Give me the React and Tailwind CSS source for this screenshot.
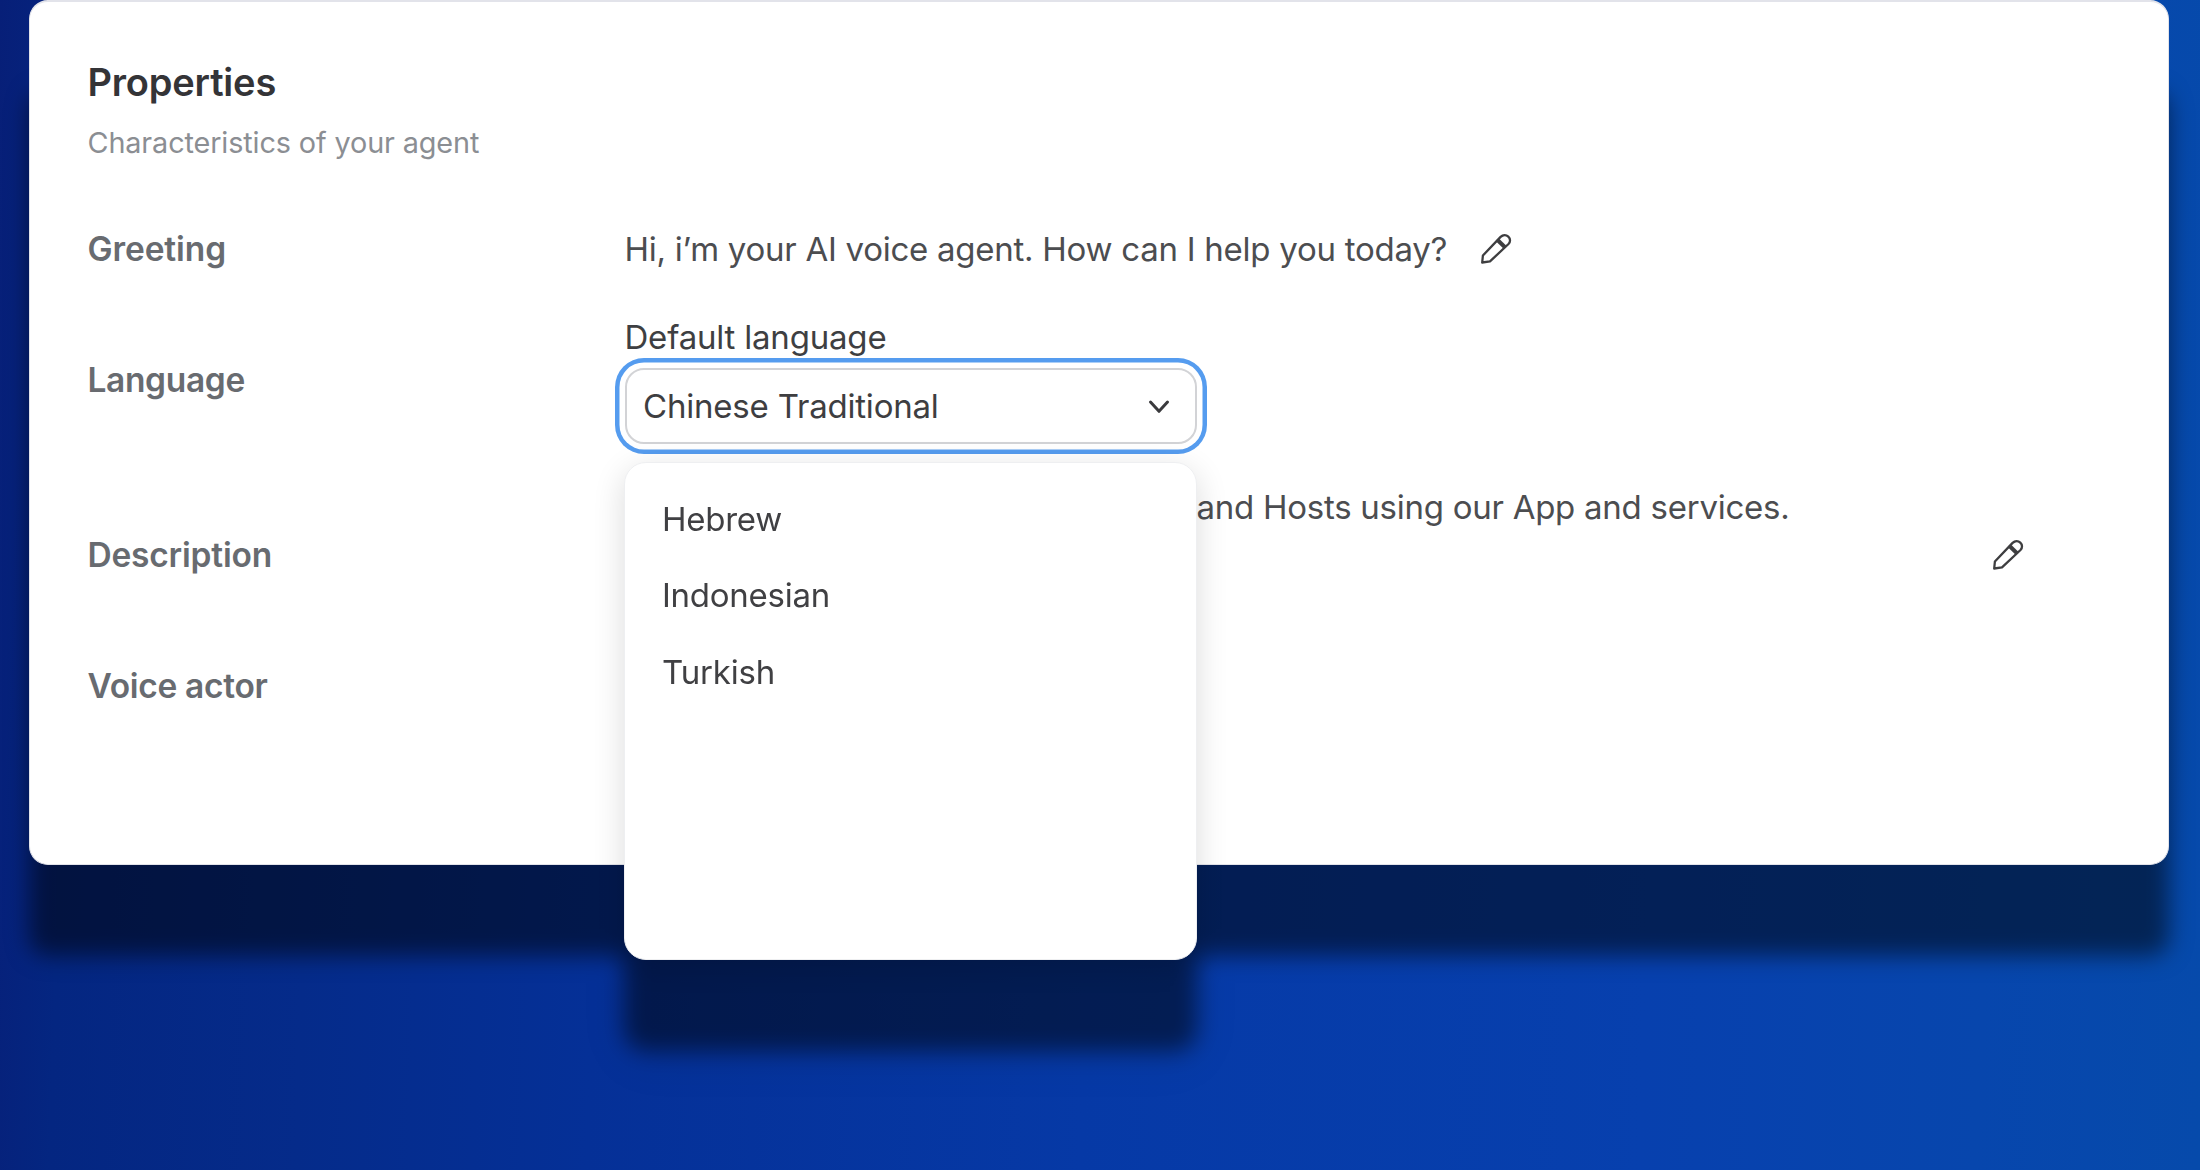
import React from "react";

function Pencil() {
  return (
    <svg width="32" height="32" viewBox="11 7 32 32" fill="none" stroke="#3e3e40" strokeWidth="2.3" strokeLinejoin="round" strokeLinecap="round" className="shrink-0">
      <path d="M13.2 36.5 13.9 29.5 31.6 10.9C34 8.6 37.2 8.7 39.3 10.7c2.2 2.1 2.3 5.1 0.2 7.3L21 35.4Z" />
      <path d="m28.8 14.3 7.2 7" strokeWidth="4" strokeLinecap="butt" />
    </svg>
  );
}

function Row({ label, height, tracking, children }) {
  return (
    <div className={`flex items-center ${height}`}>
      <div className={`w-[537px] shrink-0 text-[33.5px] font-semibold text-[#686b70] ${tracking}`}>{label}</div>
      {children}
    </div>
  );
}

const options = [
  { name: "Hebrew", tracking: "tracking-[-0.25px]" },
  { name: "Indonesian", tracking: "tracking-[-0.25px]" },
  { name: "Turkish", tracking: "tracking-[-0.2px]" },
];

function LanguageSelect() {
  return (
    <div className="relative ml-[0.5px] mt-3 w-[572px]">
      <button className="flex h-[76px] w-full items-center justify-between rounded-[19px] border-[2.5px] border-[#d2d3d6] bg-white pl-4 pr-[25px] text-[#3e3e41] shadow-[0_0_0_5.5px_#ffffff,0_0_0_10px_#559cef]">
        <span className="tracking-[-0.2px]">Chinese Traditional</span>
        <svg width="22" height="16" viewBox="0 0 22 16" fill="none" stroke="#3a3a3d" strokeWidth="3" strokeLinecap="round" strokeLinejoin="round">
          <path d="M2.5 4 11 13.3 19.5 4" />
        </svg>
      </button>
      <ul className="absolute left-[-1px] top-[94px] z-10 h-[498px] w-[572.5px] rounded-[22px] border border-[#eeeff1] bg-white pt-[18px] text-[#404043] shadow-[0_8px_32px_rgba(0,0,0,0.14)]">
        {options.map((o) => (
          <li key={o.name} className={`flex h-[76.3px] items-center pl-[37px] ${o.tracking}`}>
            {o.name}
          </li>
        ))}
      </ul>
    </div>
  );
}

export default function App() {
  return (
    <div className="h-[1170px] w-[2200px] overflow-hidden bg-[linear-gradient(92deg,#071f78_0%,#042681_4%,#052b8a_15%,#053097_28%,#0639a6_50%,#0740ae_75%,#0746ad_90%,#064aab_100%)] pl-[29px] font-['Inter',sans-serif]">
      <div className="drop-shadow-[0_91px_11px_rgba(0,0,0,0.5)]">
        <main className="h-[865px] w-[2140px] rounded-[19px] border border-t-2 border-[#e2e3ea] bg-white pl-[57.5px] pt-14 text-[33px] leading-10 text-[#4c4d50]">
          <h1 className="text-[38px] font-semibold leading-[48px] tracking-[-0.2px] text-[#343437]">Properties</h1>
          <p className="mt-[16.5px] text-[28.8px] tracking-[-0.12px] text-[#8b8e93]">Characteristics of your agent</p>

          <div className="mt-[46px]">
            <Row label="Greeting" height="h-20" tracking="tracking-[-0.1px]">
              <span className="tracking-[-0.26px]">Hi, i’m your AI voice agent. How can I help you today?</span>
              <div className="ml-[33px]">
                <Pencil />
              </div>
            </Row>

            <Row label="Language" height="h-[183px]" tracking="tracking-[-0.35px]">
              <div>
                <div className="translate-y-px tracking-[-0.2px] text-[#3e3f42]">Default language</div>
                <LanguageSelect />
              </div>
            </Row>

            <Row label="Description" height="h-[167px]" tracking="tracking-[-0.2px]">
              <p className="ml-[572px] h-36 leading-[48px] tracking-[-0.26px]">and Hosts using our App and services.</p>
              <div className="ml-auto mr-[144px]">
                <Pencil />
              </div>
            </Row>

            <Row label="Voice actor" height="h-[94px]" tracking="tracking-[-0.3px]" />
          </div>
        </main>
      </div>
    </div>
  );
}
